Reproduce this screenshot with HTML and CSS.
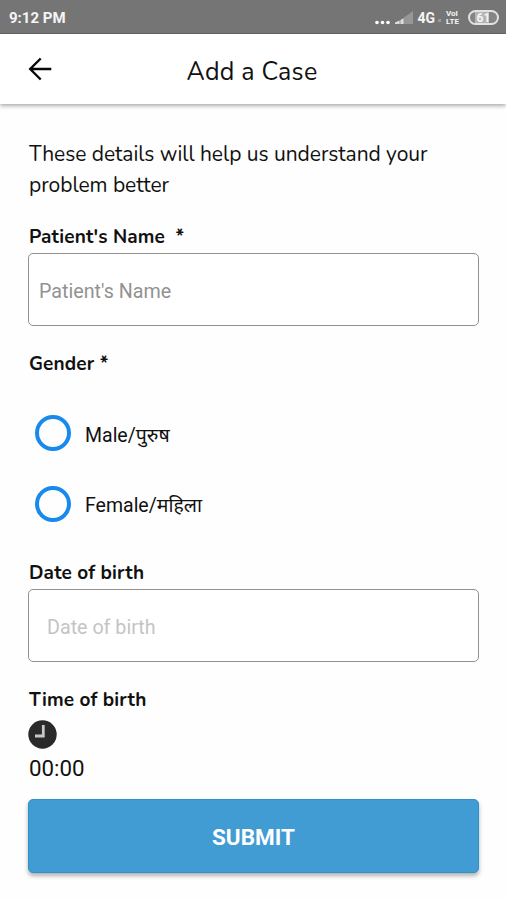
FILE: index.html
```html
<!DOCTYPE html>
<html lang="en">
<head>
<meta charset="utf-8">
<meta name="viewport" content="width=device-width, initial-scale=1">
<title>Add a Case</title>
<link rel="stylesheet" href="styles.css">
</head>
<body>
<div class="status">
  <span class="clock">9:12 PM</span>
  <div class="indicators">
    <svg class="signal" width="41" height="16" viewBox="0 0 41 16"><g fill="#fff"><circle cx="3" cy="11.500" r="1.8"/><circle cx="8.5" cy="11.500" r="1.8"/><circle cx="14" cy="11.500" r="1.8"/></g><path d="M39 0v13H21z" fill="#979797"/><path d="M25.500 9.500V13H21v-1.500zM29.500 7.500 26.500 9v4h3z" fill="#ddd"/></svg>
    <span class="network">4G</span>
    <span class="roam"></span>
    <span class="volte"><span>VoI</span><span>LTE</span></span>
    <span class="battery">61</span>
  </div>
</div>
<header class="appbar">
  <svg class="back" width="24" height="24" viewBox="0 0 24 24" fill="none" stroke="#080808" stroke-width="2.4"><path d="M23.3 12H2M12.7 1.5 2.2 12l10.5 10.5"/></svg>
  <h1 class="title">Add a Case</h1>
</header>
<main class="form">
  <p class="intro"><span class="line">These details will help us understand your</span> <span class="line">problem better</span></p>
  <label class="label name-label" for="name">Patient's Name &nbsp;*</label>
  <input class="field" id="name" type="text" placeholder="Patient's Name">
  <div class="label gender-label">Gender *</div>
  <div class="option"><span class="radio"></span><span class="choice">Male/पुरुष</span></div>
  <div class="option"><span class="radio"></span><span class="choice">Female/महिला</span></div>
  <label class="label date-label" for="date">Date of birth</label>
  <input class="field date" id="date" type="text" placeholder="Date of birth">
  <div class="label time-label">Time of birth</div>
  <svg class="time-icon" width="29" height="29" viewBox="0 0 29 29"><circle cx="14.5" cy="14.5" r="14.2" fill="#2a2a2a"/><path d="M15.300 5v11H7" fill="none" stroke="#c8c8c8" stroke-width="2.8"/></svg>
  <div class="time">00:00</div>
  <button class="submit" type="button">SUBMIT</button>
</main>
</body>
</html>
```

FILE: styles.css
```css
* { box-sizing: border-box; }
body {
  margin: 0;
  height: 900px;
  overflow: hidden;
  background: #fefefe;
  color: #111;
  font-family: Nunito, Lato, "Liberation Sans", sans-serif;
}
.status {
  height: 34px;
  padding: 2px 7px 0 9px;
  display: flex;
  align-items: center;
  justify-content: space-between;
  background: #757575;
  border-bottom: 1px solid #666;
  color: #f5f5f5;
  font-family: Roboto, sans-serif;
  font-weight: 700;
}
.clock { font-size: 15px; }
.indicators { display: flex; align-items: center; }
.signal { margin-top: 2px; }
.network { margin-left: 2px; font-size: 14px; }
.roam { width: 3px; height: 3px; margin: 5px 5px 0 3px; background: #999; }
.volte { display: flex; flex-direction: column; width: 16px; font-size: 8px; line-height: 8px; }
.battery {
  width: 31px;
  height: 15px;
  margin-left: 6px;
  border: 2px solid #e2e2e2;
  border-radius: 8px;
  background: linear-gradient(90deg, #858585 20%, #b5b5b5 20% 70%, #858585 70%);
  font-size: 12px;
  line-height: 12px;
  text-align: center;
}
.appbar {
  height: 70px;
  display: grid;
  grid-template-columns: 28px 24px 1fr 54px;
  align-items: center;
  background: #fff;
  box-shadow: 0 2px 4px rgba(0, 0, 0, .32);
}
.back { grid-column: 2; }
.title {
  margin: 6px 0 0;
  text-align: center;
  font-size: 25px;
  font-weight: 400;
  letter-spacing: .25px;
}
.form { display: flex; flex-direction: column; padding: 35px 28px 0; }
.intro { margin: 0; padding-left: 1px; font-size: 21px; line-height: 31px; letter-spacing: -.04px; }
.line { display: block; white-space: nowrap; }
.label {
  height: 24px;
  padding-left: 1px;
  font-size: 19px;
  font-weight: 700;
  line-height: 24px;
  letter-spacing: .14px;
  white-space: pre;
}
.name-label { margin-top: 24px; }
.field {
  width: 451px;
  height: 73px;
  margin-top: 4px;
  padding: 3px 9px 0 10px;
  border: 1.5px solid #929292;
  border-radius: 5px;
  background: #fff;
  outline: 0;
  font: 19.7px Roboto, sans-serif;
}
.field::placeholder { color: #929292; opacity: 1; }
.date { padding-left: 18px; }
.date::placeholder { color: #c4c4c4; }
.gender-label { margin-top: 26px; margin-bottom: 22px; }
.option {
  height: 70.5px;
  display: flex;
  align-items: center;
  padding-left: 7px;
  gap: 14px;
  font: 19.5px Roboto, "Noto Sans Devanagari", sans-serif;
}
.choice { padding-top: 7px; }
.radio { width: 36px; height: 36px; border: 4px solid #188aed; border-radius: 50%; }
.date-label { margin-top: 22px; }
.time-label { margin-top: 26px; }
.time-icon { margin-top: 8px; }
.time { margin-top: 4px; padding-left: 1px; font: 22.3px/30px Roboto, sans-serif; }
.submit {
  width: 451px;
  height: 74px;
  margin-top: 16px;
  padding: 2px 0 0;
  border: 1px solid #2f91c6;
  border-radius: 5px;
  background: #409cd3;
  box-shadow: 0 3px 4px rgba(0, 0, 0, .3);
  color: #fff;
  font: 700 22.5px Roboto, sans-serif;
}
```
